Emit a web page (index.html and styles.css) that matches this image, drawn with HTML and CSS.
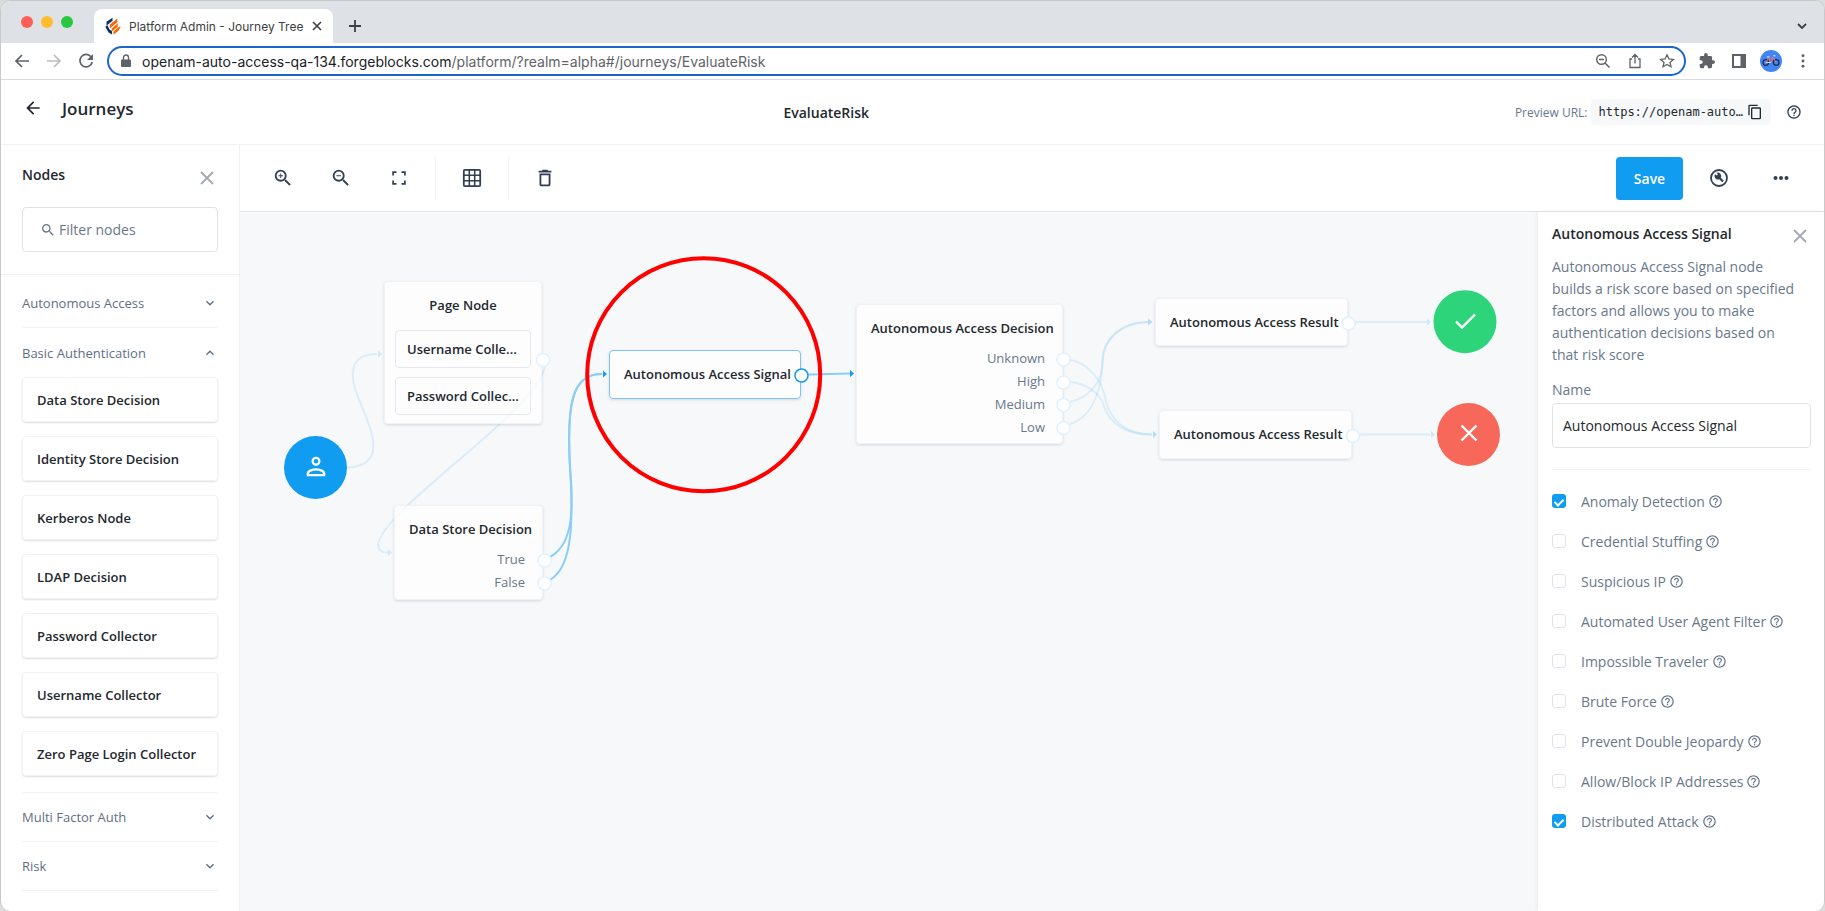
FILE: index.html
```html
<!DOCTYPE html>
<html lang="en">
<head>
<meta charset="utf-8">
<title>Platform Admin - Journey Tree</title>
<link rel="stylesheet" href="styles.css">
</head>
<body>
<svg class="defs" aria-hidden="true">
  <symbol id="help" viewBox="0 0 24 24"><path d="M11 18h2v-2h-2v2zm1-16C6.480 2 2 6.480 2 12s4.480 10 10 10 10-4.480 10-10S17.520 2 12 2zm0 18c-4.410 0-8-3.590-8-8s3.590-8 8-8 8 3.590 8 8-3.590 8-8 8zm0-14c-2.210 0-4 1.790-4 4h2c0-1.100.9-2 2-2s2 .9 2 2c0 2-3 1.750-3 5h2c0-2.250 3-2.500 3-5 0-2.210-1.790-4-4-4z"/></symbol>
  <symbol id="down" viewBox="0 0 24 24"><path d="M7.400 8.600 12 13.200l4.600-4.600L18 10l-6 6-6-6z"/></symbol>
  <symbol id="close" viewBox="0 0 24 24"><path d="M4 4l16 16M20 4L4 20" fill="none" stroke="currentColor" stroke-width="2.400"/></symbol>
  <symbol id="back" viewBox="0 0 24 24"><path d="M20 11H7.830l5.590-5.590L12 4l-8 8 8 8 1.410-1.410L7.830 13H20v-2z"/></symbol>
  <symbol id="search" viewBox="0 0 24 24"><path d="M15.500 14h-.79l-.28-.27A6.470 6.470 0 0 0 16 9.500 6.500 6.500 0 1 0 9.500 16c1.610 0 3.090-.59 4.230-1.570l.27.28v.79l5 4.990L20.490 19l-4.990-5zm-6 0C7.010 14 5 11.990 5 9.500S7.010 5 9.500 5 14 7.010 14 9.500 11.990 14 9.500 14z"/></symbol>
</svg>
<div class="window">
  <div class="tabstrip">
    <div class="lights"><i class="light red"></i><i class="light amber"></i><i class="light green"></i></div>
    <div class="tab">
      <svg class="favicon" viewBox="0 0 16 18"><path d="M7.500 .8v3L1.500 8.800V4.800zM.3 9.800l2.200-1.500 2 4.200 2.500 1.500v3.500L3.500 15.500z" fill="#0b2f6f"/><path d="M12.300 1.500v3.800L4.800 11.500V7.800zM12.800 6.300v3.500l-6 4.700v-3zM15.800 9.500l-2.300 4.200-5 4.100v-3.300l5.500-4.800z" fill="#f96700"/></svg>
      <span class="tab-title">Platform Admin - Journey Tree</span>
      <button class="plain" aria-label="Close tab"><svg class="i10" viewBox="0 0 10 10"><path d="M1 1l8 8M9 1L1 9" fill="none" stroke="#3c4043" stroke-width="1.600"/></svg></button>
    </div>
    <button class="plain newtab" aria-label="New tab"><svg class="i12" viewBox="0 0 12 12"><path d="M6 0v12M0 6h12" stroke="#3c4043" stroke-width="1.800"/></svg></button>
    <button class="plain tabmenu" aria-label="Search tabs"><svg class="i10" viewBox="0 0 10 10"><path d="M1 3l4 4 4-4" fill="none" stroke="#3c4043" stroke-width="1.800"/></svg></button>
  </div>
  <div class="navbar">
    <button class="plain" aria-label="Back"><svg class="i20 grey" viewBox="0 0 20 20"><path d="M17 10H4M10 4l-6 6 6 6" fill="none" stroke="currentColor" stroke-width="1.700"/></svg></button>
    <button class="plain" aria-label="Forward"><svg class="i20 pale" viewBox="0 0 20 20"><path d="M3 10h13M10 4l6 6-6 6" fill="none" stroke="currentColor" stroke-width="1.700"/></svg></button>
    <button class="plain" aria-label="Reload"><svg class="i20 grey" viewBox="0 0 20 20"><path d="M15.300 6.200A6.200 6.200 0 1 0 16.200 11" fill="none" stroke="currentColor" stroke-width="1.700"/><path d="M17 3v6h-6z"/></svg></button>
    <div class="omnibox">
      <svg class="lock" viewBox="0 0 10 14"><path d="M1 5.500h8q1 0 1 1V12q0 1-1 1H1q-1 0-1-1V6.500q0-1 1-1z"/><path d="M2.500 6V3.500a2.500 2.500 0 0 1 5 0V6" fill="none" stroke="currentColor" stroke-width="1.400"/></svg>
      <span class="url"><b>openam-auto-access-qa-134.forgeblocks.com</b>/platform/?realm=alpha#/journeys/EvaluateRisk</span>
      <button class="plain" aria-label="Zoom"><svg class="i16 grey" viewBox="0 0 16 16"><circle cx="6.500" cy="6.500" r="4.800" fill="none" stroke="currentColor" stroke-width="1.400"/><path d="M4 6.500h5M10 10l4.500 4.500" stroke="currentColor" stroke-width="1.500"/></svg></button>
      <button class="plain" aria-label="Share"><svg class="i16 grey" viewBox="0 0 16 16"><path d="M5 6H3v8.500h10V6h-2M8 10.500V2M5 4.500l3-3 3 3" fill="none" stroke="currentColor" stroke-width="1.300"/></svg></button>
      <button class="plain" aria-label="Bookmark"><svg class="i16 grey" viewBox="0 0 16 16"><path d="M8 1.800l1.900 4.100 4.500.5-3.400 3 1 4.400L8 11.500l-4 2.300 1-4.400-3.400-3 4.500-.5z" fill="none" stroke="currentColor" stroke-width="1.300"/></svg></button>
    </div>
    <button class="plain" aria-label="Extensions"><svg class="i16 grey" viewBox="1 1 22 22"><path d="M20.500 11H19V7c0-1.100-.9-2-2-2h-4V3.500a2.500 2.500 0 0 0-5 0V5H4c-1.100 0-2 .9-2 2v3.800h1.500a2.700 2.700 0 0 1 0 5.400H2V20c0 1.100.9 2 2 2h3.800v-1.500a2.700 2.700 0 0 1 5.400 0V22H17c1.100 0 2-.9 2-2v-4h1.500a2.500 2.500 0 0 0 0-5z"/></svg></button>
    <button class="plain" aria-label="Side panel"><svg class="i16 grey" viewBox="0 0 16 16"><path d="M1 1h14v14H1zM3 3v10h6.500V3z" fill-rule="evenodd"/></svg></button>
    <button class="plain" aria-label="Profile"><svg class="i22" viewBox="0 0 22 22"><circle cx="11" cy="11" r="11" fill="#4285f4"/><g fill="none" stroke="#1f2a44" stroke-width="1.200"><circle cx="5.800" cy="12.500" r="2.800"/><circle cx="16.200" cy="12.500" r="2.800"/></g><path d="M5.800 12.500l2.700-4.500h5l2.700 4.500M8.500 8l2.300 4.500 2.700-4.500" fill="none" stroke="#f0705c" stroke-width=".9"/><path d="M7 6.800h2.500M13 5.800h2.500M10.800 12.500H6" fill="none" stroke="#d9e2f3" stroke-width="1"/></svg></button>
    <button class="plain" aria-label="Menu"><svg class="dots grey" viewBox="0 0 4 16"><circle cx="2" cy="2" r="1.700"/><circle cx="2" cy="8" r="1.700"/><circle cx="2" cy="14" r="1.700"/></svg></button>
  </div>

  <header class="header">
    <div class="crumb"><button class="plain" aria-label="Back to journeys"><svg class="i20" viewBox="0 0 24 24"><use href="#back"/></svg></button><h1>Journeys</h1></div>
    <h2>EvaluateRisk</h2>
    <div class="preview">
      <span>Preview URL:</span>
      <span class="preview-url">https://openam-auto…<button class="plain" aria-label="Copy"><svg class="i16" viewBox="0 0 24 24"><path d="M16 1H4a2 2 0 0 0-2 2v14h2V3h12V1zm3 4H8a2 2 0 0 0-2 2v14c0 1.100.9 2 2 2h11a2 2 0 0 0 2-2V7a2 2 0 0 0-2-2zm0 16H8V7h11v14z"/></svg></button></span>
      <button class="plain help" aria-label="Help"><svg class="i16" viewBox="0 0 24 24"><use href="#help"/></svg></button>
    </div>
  </header>

  <div class="app">
    <aside class="sidebar">
      <div class="side-head"><h3>Nodes</h3><button class="plain muted" aria-label="Close nodes"><svg class="i18" viewBox="0 0 24 24"><use href="#close"/></svg></button></div>
      <label class="filter"><svg class="i16" viewBox="0 0 24 24"><use href="#search"/></svg><input type="text" placeholder="Filter nodes" aria-label="Filter nodes"></label>
      <div class="groups">
        <button class="group">Autonomous Access<svg class="i16" viewBox="0 0 24 24"><use href="#down"/></svg></button>
        <button class="group open">Basic Authentication<svg class="i16" viewBox="0 0 24 24"><use href="#down"/></svg></button>
        <ul class="cards">
          <li>Data Store Decision</li><li>Identity Store Decision</li><li>Kerberos Node</li><li>LDAP Decision</li><li>Password Collector</li><li>Username Collector</li><li>Zero Page Login Collector</li>
        </ul>
        <button class="group">Multi Factor Auth<svg class="i16" viewBox="0 0 24 24"><use href="#down"/></svg></button>
        <button class="group">Risk<svg class="i16" viewBox="0 0 24 24"><use href="#down"/></svg></button>
      </div>
    </aside>

    <main class="editor">
      <div class="toolbar">
        <div class="tools zoom">
          <button class="plain" aria-label="Zoom in"><svg class="i22" viewBox="0 0 24 24"><use href="#search"/><path d="M9 7h1v2h2v1h-2v2H9v-2H7V9h2z"/></svg></button>
          <button class="plain" aria-label="Zoom out"><svg class="i22" viewBox="0 0 24 24"><use href="#search"/><path d="M7 9h5v1H7z"/></svg></button>
          <button class="plain" aria-label="Fit to screen"><svg class="i22" viewBox="-1 -1 26 26"><path d="M4 4h5v2H6v3H4zM15 4h5v5h-2V6h-3zM4 15h2v3h3v2H4zM18 15h2v5h-5v-2h3z"/></svg></button>
        </div>
        <div class="tools"><button class="plain" aria-label="Grid"><svg class="i22" viewBox="-1 -1 22 22"><rect x="1.800" y="1.800" width="16.400" height="16.400" rx="1.200" fill="none" stroke="currentColor" stroke-width="1.800"/><path d="M7.300 2v16M12.700 2v16M2 7.300h16M2 12.700h16" fill="none" stroke="currentColor" stroke-width="1.600"/></svg></button></div>
        <div class="tools"><button class="plain" aria-label="Delete"><svg class="i22" viewBox="0 0 24 24"><path d="M6 19c0 1.100.9 2 2 2h8c1.100 0 2-.9 2-2V7H6v12zM8 9h8v10H8V9zm7.500-5l-1-1h-5l-1 1H5v2h14V4z"/></svg></button></div>
        <button class="save">Save</button>
        <button class="plain wrench" aria-label="Debug"><svg class="i20" viewBox="0 0 20 20"><circle cx="10" cy="10" r="8" fill="none" stroke="currentColor" stroke-width="1.800"/><path d="M9 6.200 7.600 7.600 6 6a3.600 3.600 0 0 0 4.300 5.300l3 3 1.500-1.500-3-3A3.600 3.600 0 0 0 7.400 4.700z"/></svg></button>
        <button class="plain more" aria-label="More"><svg class="i16" viewBox="0 0 16 16"><circle cx="2.500" cy="8" r="2"/><circle cx="8" cy="8" r="2"/><circle cx="13.500" cy="8" r="2"/></svg></button>
      </div>
      <div class="work">
        <div class="canvas">
          <svg class="wires" viewBox="240 212 1297 699" width="1297" height="699">
            <g class="faint">
              <path d="M347 467.500C390 466 370 425 359 400C346 368 354 354 377 354"/>
              <path d="M545 364C546 405 380 510 378 545Q379 553 388 552.500"/>
              <path d="M1070 360C1085 362 1099 376 1104 393C1108 420 1125 434.500 1152 434.500"/>
              <path d="M1070 382C1084 383 1100 392 1104 406C1110 426 1129 434.500 1152 434.500"/>
              <path d="M1070 402C1094 396 1103 378 1103 360C1103 340 1122 322 1149 322"/>
              <path d="M1070 424C1096 416 1102 382 1102 364C1102 340 1119 322 1149 322"/>
              <path d="M1355 322H1427M1360 434.500H1430"/>
            </g>
            <g class="strong">
              <path d="M550 557C572 545 573 513 571 480C565 402 572 374 602 374"/>
              <path d="M550 580C570 568 573 532 571 485C565 402 572 374 602 374"/>
              <path d="M809 374.500L850 373.500"/>
            </g>
            <g class="tips-faint"><path d="M378 350.500l4 3.500-4 3.500zM388 549l4 3.500-4 3.500zM1427 318.500l4 3.500-4 3.500zM1431 431l4 3.500-4 3.500z"/></g>
            <g class="tips-mid"><path d="M1148 318.500l4.500 3.500-4.500 3.500zM1153 431l4 3.500-4 3.500z"/></g>
            <g class="tips"><path d="M603 370.500l4 3.500-4 3.500zM850 370l4 3.500-4 3.500z"/></g>
          </svg>
          <div class="node page"><h4>Page Node</h4><div class="sub">Username Colle...</div><div class="sub">Password Collec...</div></div>
          <div class="node store"><h4>Data Store Decision</h4><p>True</p><p>False</p></div>
          <div class="node signal"><h4>Autonomous Access Signal</h4></div>
          <div class="node decision"><h4>Autonomous Access Decision</h4><p>Unknown</p><p>High</p><p>Medium</p><p>Low</p></div>
          <div class="node result-a"><h4>Autonomous Access Result</h4></div>
          <div class="node result-b"><h4>Autonomous Access Result</h4></div>
          <svg class="wires" viewBox="240 212 1297 699" width="1297" height="699">
            <g class="ports"><circle cx="543" cy="360" r="6.500"/><circle cx="544.500" cy="560.500" r="6.500"/><circle cx="544.500" cy="583.500" r="6.500"/><circle cx="1063.500" cy="359.500" r="6.500"/><circle cx="1063.500" cy="382.500" r="6.500"/><circle cx="1063.500" cy="405" r="6.500"/><circle cx="1063.500" cy="428" r="6.500"/><circle cx="1348.500" cy="323.500" r="6.500"/><circle cx="1353" cy="436" r="6.500"/><circle class="on" cx="801.500" cy="375.500" r="6.500"/></g>
            <circle cx="315.500" cy="467.500" r="31.500" fill="#109cf1"/>
            <path transform="translate(302 452)" d="M14 5.800a3.400 3.400 0 1 1 0 6.800 3.400 3.400 0 0 1 0-6.800zM5.800 23.200v-1.500c0-3 5.500-4.400 8.200-4.400s8.200 1.400 8.200 4.400v1.500z" fill="none" stroke="#fff" stroke-width="2.200"/>
            <circle cx="1465" cy="321.700" r="31.500" fill="#2ed47a"/>
            <path d="M1456 321.500l6 6 13-13" fill="none" stroke="#fff" stroke-width="2.400"/>
            <circle cx="1468.500" cy="434.500" r="31.500" fill="#f7685b"/>
            <path d="M1461.500 425.500l15 15M1476.500 425.500l-15 15" fill="none" stroke="#fff" stroke-width="2.400"/>
            <circle cx="703.700" cy="374.700" r="116.500" fill="none" stroke="#f00" stroke-width="4"/>
          </svg>
        </div>
        <aside class="panel">
          <div class="panel-head"><h3>Autonomous Access Signal</h3><button class="plain muted" aria-label="Close panel"><svg class="i18" viewBox="0 0 24 24"><use href="#close"/></svg></button></div>
          <p class="desc">Autonomous Access Signal node builds a risk score based on specified factors and allows you to make authentication decisions based on that risk score</p>
          <label class="name" for="name">Name</label>
          <input class="field" id="name" type="text" value="Autonomous Access Signal">
          <div class="checks">
            <label><input type="checkbox" checked><span>Anomaly Detection</span><svg viewBox="0 0 24 24"><use href="#help"/></svg></label>
            <label><input type="checkbox"><span>Credential Stuffing</span><svg viewBox="0 0 24 24"><use href="#help"/></svg></label>
            <label><input type="checkbox"><span>Suspicious IP</span><svg viewBox="0 0 24 24"><use href="#help"/></svg></label>
            <label><input type="checkbox"><span>Automated User Agent Filter</span><svg viewBox="0 0 24 24"><use href="#help"/></svg></label>
            <label><input type="checkbox"><span>Impossible Traveler</span><svg viewBox="0 0 24 24"><use href="#help"/></svg></label>
            <label><input type="checkbox"><span>Brute Force</span><svg viewBox="0 0 24 24"><use href="#help"/></svg></label>
            <label><input type="checkbox"><span>Prevent Double Jeopardy</span><svg viewBox="0 0 24 24"><use href="#help"/></svg></label>
            <label><input type="checkbox"><span>Allow/Block IP Addresses</span><svg viewBox="0 0 24 24"><use href="#help"/></svg></label>
            <label><input type="checkbox" checked><span>Distributed Attack</span><svg viewBox="0 0 24 24"><use href="#help"/></svg></label>
          </div>
        </aside>
      </div>
    </main>
  </div>
</div>
</body>
</html>
```
FILE: styles.css
```css
* { box-sizing: border-box; margin: 0; padding: 0; }
body { background: #dcdcdc; font-family: "Open Sans", sans-serif; font-size: 14px; color: #23282e; }
svg { display: block; flex: none; fill: currentColor; }
.defs { width: 0; height: 0; position: absolute; }
button, input { font: inherit; color: inherit; }
button { cursor: pointer; }
.plain { display: flex; justify-content: center; background: none; border: 0; }
.i10 { width: 10px; height: 10px; }
.i12 { width: 12px; height: 12px; }
.i16 { width: 16px; height: 16px; }
.i18 { width: 18px; height: 18px; }
.i20 { width: 20px; height: 20px; }
.i22 { width: 22px; height: 22px; }
.grey { color: #5f6368; }
.pale { color: #babcbe; }
.muted { color: #a3a9b3; }

.window { display: flex; flex-direction: column; min-height: 100vh; background: #fff; border: 1px solid #c9c9c9; border-bottom: 0; border-radius: 10px; overflow: hidden; }
.tabstrip { display: flex; align-items: center; height: 42px; background: #dee1e6; padding-right: 17px; }
.lights { display: flex; gap: 8px; padding: 3px 0 0 20px; width: 93px; height: 18px; }
.light { width: 12px; height: 12px; border-radius: 50%; }
.red { background: #ff5f57; }
.amber { background: #febc2e; }
.green { background: #28c840; }
.tab { display: flex; align-items: center; width: 239px; height: 34px; align-self: flex-end; background: #fff; border-radius: 8px 8px 0 0; padding: 0 11px; gap: 8px; }
.favicon { width: 16px; height: 18px; }
.tab-title { flex: 1; font: 12px Inter, sans-serif; color: #3c4043; white-space: nowrap; }
.newtab { margin: 8px 0 0 16px; }
.tabmenu { margin: 8px 0 0 auto; }
.navbar { display: flex; align-items: center; height: 37px; padding: 0 5px; border-bottom: 1px solid #d9dadd; }
.navbar .plain { width: 32px; }
.omnibox { flex: 1; display: flex; align-items: center; height: 30px; margin: 0 5px; border: 2px solid #1b66c9; border-radius: 15px; padding: 0 1px 0 12px; }
.lock { width: 10px; height: 14px; margin-right: 11px; color: #5f6368; }
.url { flex: 1; font: 14px Inter, sans-serif; color: #5f6368; }
.url b { font-weight: 400; color: #202124; }
.dots { width: 4px; height: 14px; }

.header { display: flex; align-items: center; justify-content: space-between; height: 65px; padding: 0 22px; border-bottom: 1px solid #eff2f7; }
.crumb { display: flex; align-items: center; gap: 19px; padding-bottom: 8px; }
h1 { font-size: 17px; font-weight: 600; }
h2 { font-size: 14px; font-weight: 600; padding-left: 4px; }
.preview { display: flex; align-items: center; gap: 3px; font-size: 12px; color: #69788b; }
.preview-url { display: flex; align-items: center; gap: 4px; height: 26px; padding: 0 8px; border-radius: 4px; background: #f6f8fa; color: #23282e; font: 12px "DejaVu Sans Mono", monospace; }
.help { color: #324054; margin-left: 12px; }

.app { flex: 1; display: flex; }
.sidebar { width: 239px; border-right: 1px solid #eff1f5; }
h3 { font-size: 14px; font-weight: 600; line-height: 20px; }
.side-head { display: flex; justify-content: space-between; padding: 20px 23px 0 21px; }
.side-head button { padding-top: 4px; height: 24px; }
.filter { display: flex; align-items: center; height: 45px; margin: 18px 21px 22px; padding: 0 17px; gap: 3px; border: 1px solid #dfe3e8; border-radius: 4px; color: #69788b; }
.filter input { width: 100%; border: 0; outline: 0; background: none; }
.filter input::placeholder { color: #69788b; opacity: 1; }
.groups { padding: 4px 21px 0; border-top: 1px solid #eff2f7; }
.group { display: flex; align-items: center; justify-content: space-between; width: 100%; height: 49px; background: none; border: 0; border-bottom: 1px solid #eff2f7; font-size: 13px; color: #5f6f86; }
.group.open { border: 0; }
.open svg { transform: rotate(180deg); }
.cards { display: grid; gap: 14px; list-style: none; padding-bottom: 16px; border-bottom: 1px solid #eff2f7; }
.cards li { height: 45px; padding: 0 14px; font-size: 13px; font-weight: 600; line-height: 44px; border: 1px solid #f0f2f5; border-radius: 4px; box-shadow: 0 1px 2px #0002; }

.editor { flex: 1; display: flex; flex-direction: column; }
.toolbar { display: flex; align-items: center; height: 67px; padding-right: 35px; color: #324054; border-bottom: 1px solid #e4e7ea; }
.tools { display: flex; gap: 36px; padding: 11px 25px; }
.tools.zoom { padding-left: 32px; }
.tools + .tools { border-left: 1px solid #eff2f7; }
.save { margin-left: auto; width: 67px; height: 43px; border: 0; border-radius: 4px; background: #109cf1; color: #fff; font-weight: 600; }
.wrench { margin-left: 26px; }
.more { margin-left: 44px; }
.work { flex: 1; display: flex; }
.canvas { flex: 1; position: relative; overflow: hidden; background: #f6f8fa; }
.wires { position: absolute; left: 0; top: 0; }
.node { position: absolute; background: #ffffffb8; border: 1px solid #f0f2f5; border-radius: 4px; box-shadow: 0 1px 3px #0002; padding: 14px; }
.node h4 { font-size: 13px; font-weight: 600; line-height: 18px; text-align: center; white-space: nowrap; }
.node p { font-size: 13px; line-height: 23px; text-align: right; padding-right: 3px; color: #69788b; }
.node h4 + p { margin-top: 10px; }
.page { left: 144px; top: 69px; width: 158px; height: 143px; padding: 14px 10px; }
.sub { height: 38px; margin-top: 9px; padding: 0 11px; font-size: 13px; font-weight: 600; line-height: 36px; border: 1px solid #e7e9ef; border-radius: 4px; white-space: nowrap; }
h4 + .sub { margin-top: 16px; }
.store { left: 154px; top: 293px; width: 149px; height: 95px; }
.signal { left: 369px; top: 138px; width: 192px; height: 49px; border-color: #7cc4f5; }
.decision { left: 616px; top: 92px; width: 207px; height: 140px; }
.result-a { left: 915px; top: 86px; width: 193px; height: 48px; }
.result-b { left: 919px; top: 198px; width: 193px; height: 49px; }
.faint { fill: none; stroke: #109cf1; stroke-opacity: .11; stroke-width: 2; }
.strong { fill: none; stroke: #8ccdf8; stroke-width: 2; }
.tips { fill: #109cf1; }
.tips-mid { fill: #b2dcfa; }
.tips-faint { fill: #cfe8fa; }
.ports { fill: #fff; stroke: #e1f2fd; stroke-width: 1.500; }
.ports .on { stroke: #109cf1; }

.panel { width: 286px; padding: 12px 13px 0 14px; background: #fff; box-shadow: -1px 0 4px #0001; position: relative; }
.panel-head { display: flex; justify-content: space-between; height: 20px; padding-right: 2px; }
.panel-head button { padding-top: 3px; }
.desc { margin-top: 12px; line-height: 22px; color: #69788b; padding-right: 8px; }
.name { display: block; margin-top: 13px; line-height: 22px; color: #69788b; }
.field { width: 100%; height: 45px; padding: 0 10px; margin-top: 2px; border: 1px solid #dfe3e8; border-radius: 4px; }
.checks { margin-top: 21px; padding-top: 11px; border-top: 1px solid #eff2f7; color: #69788b; }
.checks label { display: flex; align-items: center; height: 40px; }
.checks input { appearance: none; width: 14px; height: 14px; margin-right: 15px; border: 1px solid #dfe3e8; border-radius: 3px; }
.checks input:checked { border: 0; background: #109cf1; display: grid; place-items: center; }
.checks input:checked::after { content: ""; width: 4px; height: 7px; border: solid #fff; border-width: 0 2px 2px 0; transform: rotate(45deg); }
.checks svg { width: 15px; height: 15px; margin-left: 3px; }
```
